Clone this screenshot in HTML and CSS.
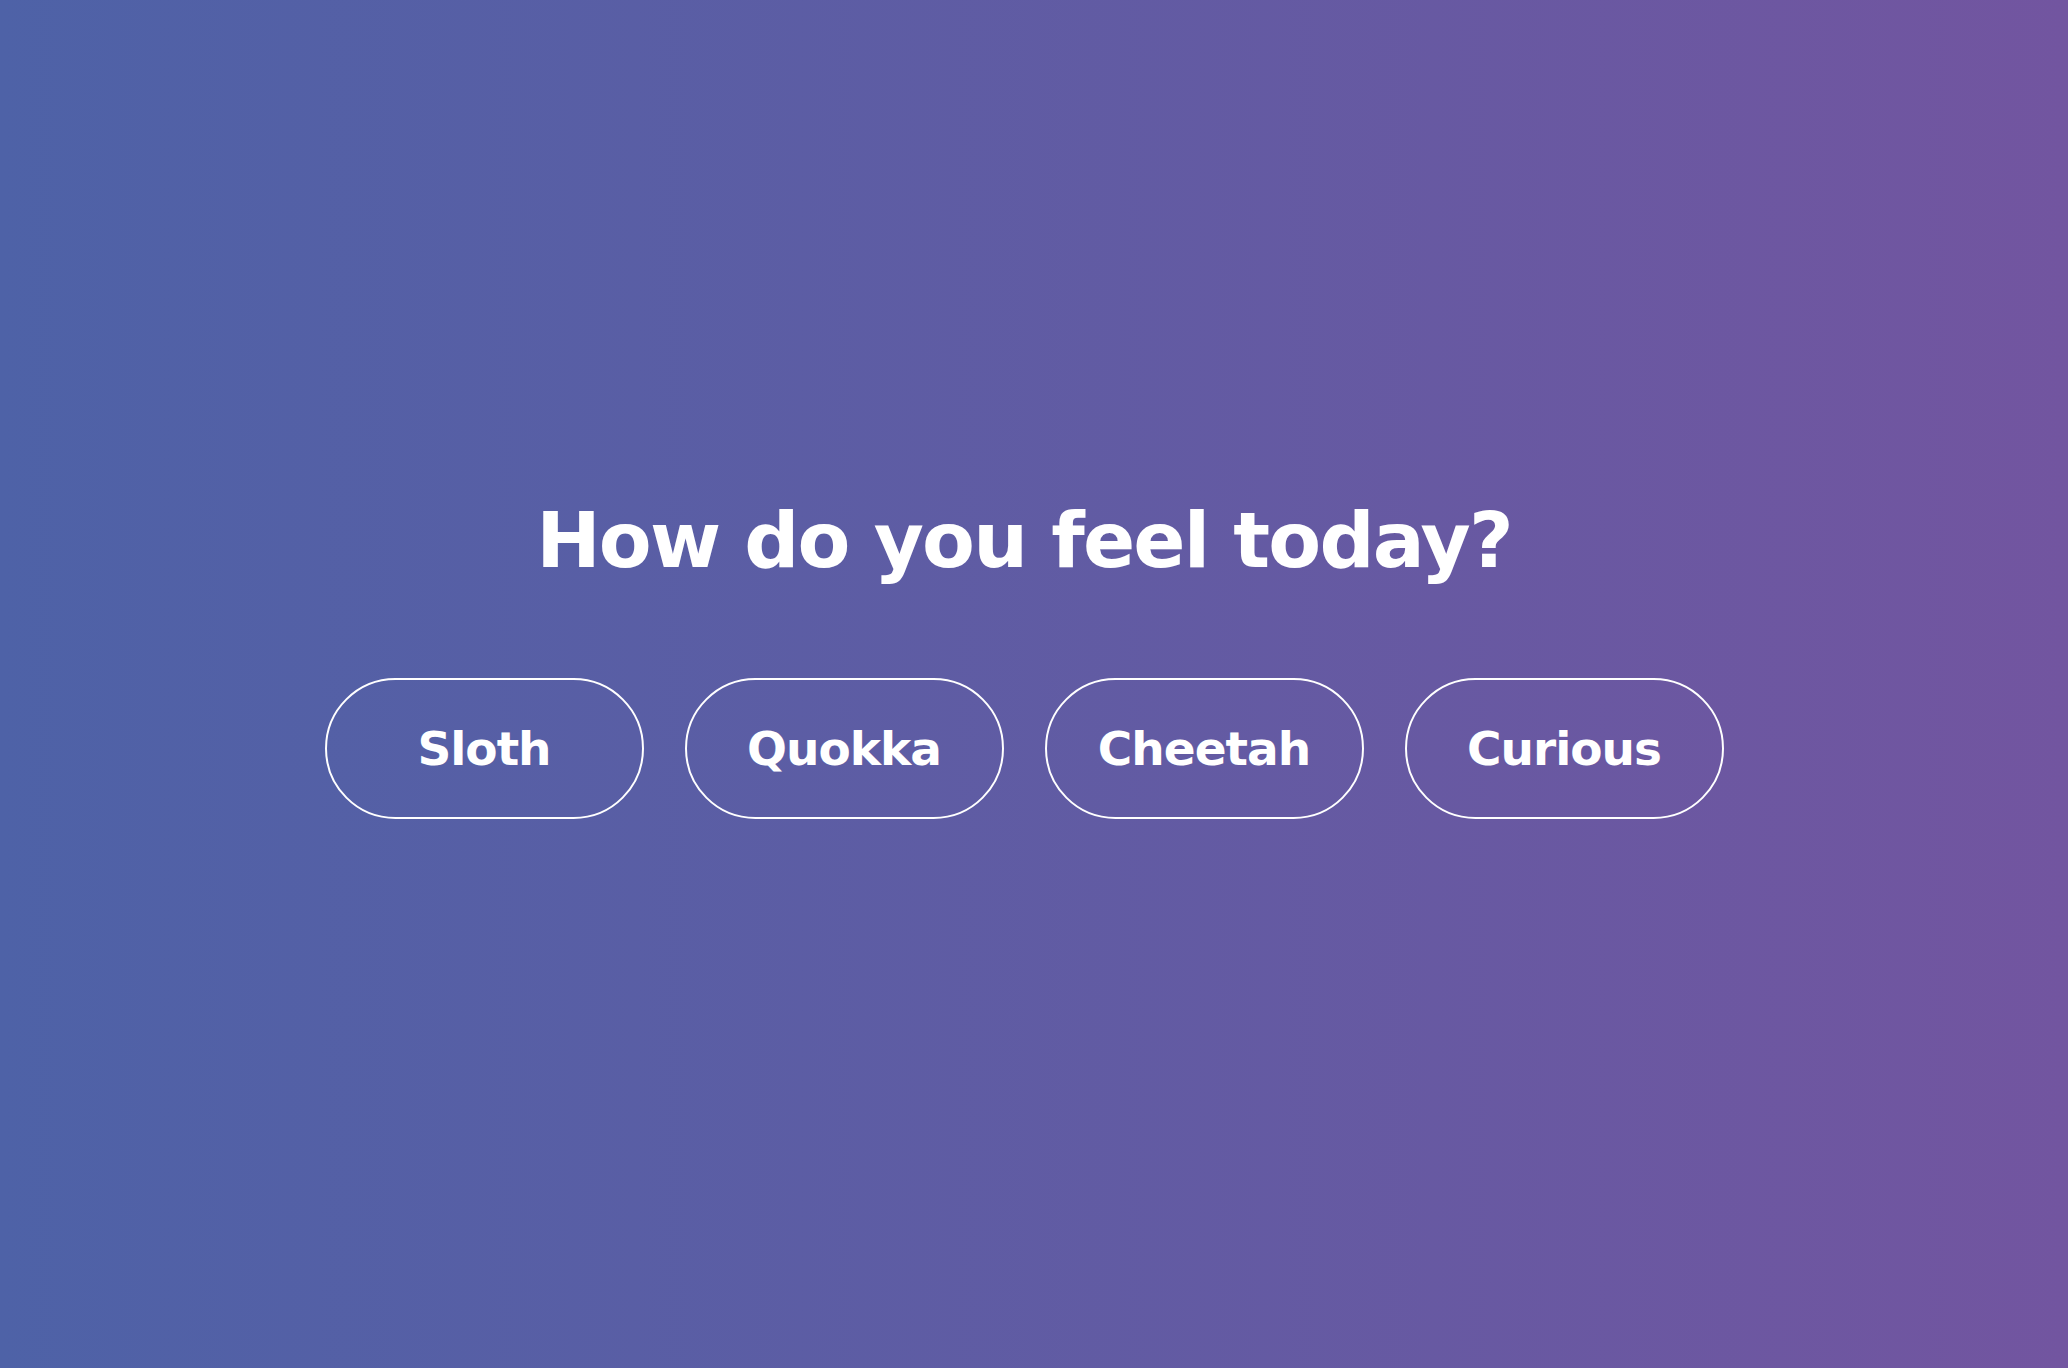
FILE: index.html
```html
<!DOCTYPE html>
<html lang="en">
<head>
<meta charset="utf-8">
<title>How do you feel today?</title>
<link rel="stylesheet" href="styles.css">
</head>
<body>
<main class="stage">
  <h1 class="question">How do you feel today?</h1>
  <div class="choices">
    <button class="choice">Sloth</button>
    <button class="choice">Quokka</button>
    <button class="choice">Cheetah</button>
    <button class="choice">Curious</button>
  </div>
</main>
</body>
</html>
```

FILE: styles.css
```css
html, body {
  margin: 0;
  padding: 0;
  height: 100%;
}

body {
  background: linear-gradient(to right, #4e62a7, #7255a0);
  font-family: "DejaVu Sans", "Noto Sans", sans-serif;
  color: #ffffff;
}

.stage {
  box-sizing: border-box;
  height: 100vh;
  display: flex;
  flex-direction: column;
  align-items: center;
  justify-content: center;
  padding-right: 20px;
  padding-bottom: 54px;
}

.question {
  margin: 0 0 91px 0;
  font-size: 77px;
  font-weight: 700;
  letter-spacing: -1.8px;
  line-height: 1.2;
}

.choices {
  display: flex;
  gap: 41px;
}

.choice {
  box-sizing: border-box;
  width: 319px;
  height: 141px;
  border: 2px solid #ffffff;
  border-radius: 9999px;
  background: transparent;
  color: #ffffff;
  font-family: "DejaVu Sans", "Noto Sans", sans-serif;
  font-size: 47px;
  font-weight: 700;
  letter-spacing: -1px;
  padding: 0;
  cursor: pointer;
}
```
